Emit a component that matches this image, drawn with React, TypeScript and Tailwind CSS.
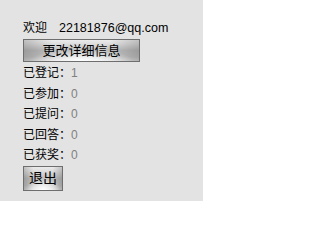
// User summary panel — welcome line, edit button, activity counts, sign out.
const FONT = "font-['Liberation_Sans','Noto_Sans_CJK_SC',sans-serif]";

const STATS: { label: string; value: number }[] = [
  { label: '已登记', value: 1 },
  { label: '已参加', value: 0 },
  { label: '已提问', value: 0 },
  { label: '已回答', value: 0 },
  { label: '已获奖', value: 0 },
];

const METAL =
  'border border-[#6e6e6e] text-black text-[13px] leading-none flex items-center justify-center ' +
  'bg-[radial-gradient(ellipse_45%_55%_at_50%_100%,#ffffff_0%,rgba(255,255,255,0.7)_35%,rgba(255,255,255,0)_100%),linear-gradient(to_right,rgba(0,0,0,0.18),rgba(0,0,0,0)_25%,rgba(0,0,0,0)_75%,rgba(0,0,0,0.18)),linear-gradient(to_bottom,#ececec_0%,#dcdcdc_20%,#bdbdbd_50%,#c4c4c4_80%,#dadada_100%)]';

export default function App() {
  return (
    <div className={`w-[203px] h-[201px] bg-[#e3e3e3] pl-[23px] pt-[20px] ${FONT}`}>
      <div className="flex items-center h-[16px] text-[12px] text-black">
        <span>欢迎</span>
        <span className="ml-[12px] text-[12.5px]">22181876@qq.com</span>
      </div>

      <button className={`mt-[3px] w-[117px] h-[23px] ${METAL}`}>更改详细信息</button>

      <ul className="mt-[1px]">
        {STATS.map((s) => (
          <li key={s.label} className="h-[20.5px] flex items-center text-[12px]">
            <span className="text-black">{s.label}：</span>
            <span className="text-[#808080]">{s.value}</span>
          </li>
        ))}
      </ul>

      <button className={`w-[40px] h-[25px] text-[14px] ${METAL}`}>退出</button>
    </div>
  );
}
